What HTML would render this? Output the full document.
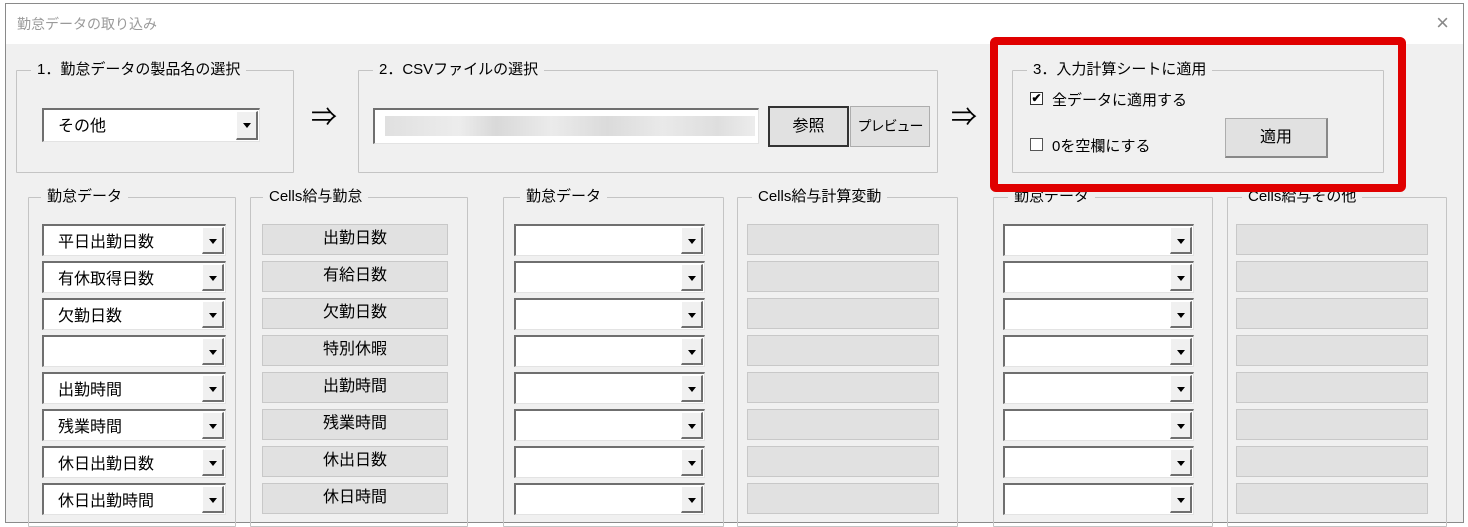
<!DOCTYPE html>
<html><head><meta charset="utf-8"><style>
*{box-sizing:border-box;margin:0;padding:0}
body{width:1468px;height:507px;overflow:hidden;background:#fff;font-family:"Liberation Sans","Noto Sans CJK JP",sans-serif;position:relative;color:#000}
.win{position:absolute;left:5px;top:3px;width:1459px;height:520px;border:1px solid #8a8a8a;background:#f0f0f0}
.tb{position:absolute;left:0;top:0;right:0;height:40px;background:#fff}
.title{position:absolute;left:11px;top:10px;font-size:14px;color:#9a9a9a}
.x{position:absolute;right:14px;top:6px;font-size:22px;color:#888;font-weight:300}
.g{position:absolute;border:1px solid #c4c4c4;border-radius:1px}
.gl{position:absolute;top:-11px;background:#f0f0f0;padding:0 6px;font-size:15px;line-height:20px;white-space:nowrap}
.a{position:absolute;font-size:26px;line-height:26px}
.cb{position:absolute;height:32px;background:#fff;border-top:2px solid #6f6f6f;border-left:2px solid #6f6f6f;border-bottom:1px solid #e3e3e3;border-right:1px solid #e3e3e3}
.cb span{position:absolute;left:14px;top:2px;font-size:16px}
.cb i{position:absolute;right:1px;top:1px;width:22px;height:27px;background:#f0f0f0;border-right:2px solid #6f6f6f;border-bottom:2px solid #6f6f6f;border-top:1px solid #fff;border-left:1px solid #fff}
.cb i:after{content:"";position:absolute;left:6px;top:11px;border-left:4px solid transparent;border-right:4px solid transparent;border-top:5px solid #000}
.lb{position:absolute;height:31px;background:#e1e1e1;border:1px solid #c8c8c8;font-size:16px;text-align:center;line-height:27px}
.bt{position:absolute;background:#e1e1e1;border:1px solid #adadad;font-size:16px;text-align:center;white-space:nowrap}
.ck{position:absolute;width:13px;height:13px;background:#fff;border:1px solid #333;font-size:12px;line-height:11px;text-align:center}
.t{position:absolute;font-size:15px;white-space:nowrap}
</style></head><body>
<div class="win">
<div class="tb"><div class="title">勤怠データの取り込み</div><div class="x">×</div></div>
</div>

<div class="g" style="left:16px;top:70px;width:278px;height:103px"><div class="gl" style="left:14px">1．勤怠データの製品名の選択</div></div>
<div class="cb" style="left:42px;top:108px;width:218px;height:34px"><span>その他</span><i style="height:29px"></i></div>
<div class="a" style="left:311px;top:104px">⇒</div>

<div class="g" style="left:358px;top:70px;width:580px;height:103px"><div class="gl" style="left:14px">2．CSVファイルの選択</div></div>
<div class="cb" style="left:373px;top:108px;width:386px;height:36px"></div>
<div style="position:absolute;left:385px;top:116px;width:370px;height:20px;background:linear-gradient(90deg,#d8d8d8,#e8e8e8 20%,#cfcfcf 30%,#e6e6e6 45%,#d2d2d2 60%,#e4e4e4 75%,#d6d6d6 90%,#e8e8e8);opacity:.8"></div>
<div class="bt" style="left:768px;top:106px;width:81px;height:41px;border:2px solid #333;line-height:37px">参照</div>
<div class="bt" style="left:850px;top:106px;width:80px;height:41px;line-height:39px;font-size:14px;letter-spacing:-1px">プレビュー</div>
<div class="a" style="left:951px;top:104px">⇒</div>

<div class="g" style="left:1012px;top:70px;width:372px;height:103px"><div class="gl" style="left:14px">3．入力計算シートに適用</div></div>
<div class="ck" style="left:1030px;top:92px;font-weight:bold">✔</div><div class="t" style="left:1052px;top:89px">全データに適用する</div>
<div class="ck" style="left:1030px;top:138px;border-color:#555"></div><div class="t" style="left:1052px;top:135px">0を空欄にする</div>
<div class="bt" style="left:1225px;top:118px;width:103px;height:40px;line-height:38px;border-right:2px solid #888;border-bottom:2px solid #888">適用</div>

<div class="g" style="left:28px;top:197px;width:208px;height:330px"><div class="gl" style="left:12px">勤怠データ</div></div>
<div class="g" style="left:250px;top:197px;width:218px;height:330px"><div class="gl" style="left:12px">Cells給与勤怠</div></div>
<div class="g" style="left:503px;top:197px;width:221px;height:330px"><div class="gl" style="left:16px">勤怠データ</div></div>
<div class="g" style="left:737px;top:197px;width:221px;height:330px"><div class="gl" style="left:14px">Cells給与計算変動</div></div>
<div class="g" style="left:993px;top:197px;width:220px;height:330px"><div class="gl" style="left:14px">勤怠データ</div></div>
<div class="g" style="left:1227px;top:197px;width:220px;height:330px"><div class="gl" style="left:14px">Cells給与その他</div></div>

<div style="position:absolute;left:990px;top:37px;width:416px;height:155px;border:8px solid #e00000;border-radius:6px;z-index:5"></div>

<!-- col A -->
<div class="cb" style="left:42px;top:224px;width:184px"><span>平日出勤日数</span><i></i></div>
<div class="cb" style="left:42px;top:261px;width:184px"><span>有休取得日数</span><i></i></div>
<div class="cb" style="left:42px;top:298px;width:184px"><span>欠勤日数</span><i></i></div>
<div class="cb" style="left:42px;top:335px;width:184px"><i></i></div>
<div class="cb" style="left:42px;top:372px;width:184px"><span>出勤時間</span><i></i></div>
<div class="cb" style="left:42px;top:409px;width:184px"><span>残業時間</span><i></i></div>
<div class="cb" style="left:42px;top:446px;width:184px"><span>休日出勤日数</span><i></i></div>
<div class="cb" style="left:42px;top:483px;width:184px"><span>休日出勤時間</span><i></i></div>
<!-- col B -->
<div class="lb" style="left:262px;top:224px;width:186px">出勤日数</div>
<div class="lb" style="left:262px;top:261px;width:186px">有給日数</div>
<div class="lb" style="left:262px;top:298px;width:186px">欠勤日数</div>
<div class="lb" style="left:262px;top:335px;width:186px">特別休暇</div>
<div class="lb" style="left:262px;top:372px;width:186px">出勤時間</div>
<div class="lb" style="left:262px;top:409px;width:186px">残業時間</div>
<div class="lb" style="left:262px;top:446px;width:186px">休出日数</div>
<div class="lb" style="left:262px;top:483px;width:186px">休日時間</div>
<!-- col C -->
<div class="cb" style="left:514px;top:224px;width:191px"><i></i></div>
<div class="cb" style="left:514px;top:261px;width:191px"><i></i></div>
<div class="cb" style="left:514px;top:298px;width:191px"><i></i></div>
<div class="cb" style="left:514px;top:335px;width:191px"><i></i></div>
<div class="cb" style="left:514px;top:372px;width:191px"><i></i></div>
<div class="cb" style="left:514px;top:409px;width:191px"><i></i></div>
<div class="cb" style="left:514px;top:446px;width:191px"><i></i></div>
<div class="cb" style="left:514px;top:483px;width:191px"><i></i></div>
<!-- col D -->
<div class="lb" style="left:747px;top:224px;width:192px"></div>
<div class="lb" style="left:747px;top:261px;width:192px"></div>
<div class="lb" style="left:747px;top:298px;width:192px"></div>
<div class="lb" style="left:747px;top:335px;width:192px"></div>
<div class="lb" style="left:747px;top:372px;width:192px"></div>
<div class="lb" style="left:747px;top:409px;width:192px"></div>
<div class="lb" style="left:747px;top:446px;width:192px"></div>
<div class="lb" style="left:747px;top:483px;width:192px"></div>
<!-- col E -->
<div class="cb" style="left:1003px;top:224px;width:191px"><i></i></div>
<div class="cb" style="left:1003px;top:261px;width:191px"><i></i></div>
<div class="cb" style="left:1003px;top:298px;width:191px"><i></i></div>
<div class="cb" style="left:1003px;top:335px;width:191px"><i></i></div>
<div class="cb" style="left:1003px;top:372px;width:191px"><i></i></div>
<div class="cb" style="left:1003px;top:409px;width:191px"><i></i></div>
<div class="cb" style="left:1003px;top:446px;width:191px"><i></i></div>
<div class="cb" style="left:1003px;top:483px;width:191px"><i></i></div>
<!-- col F -->
<div class="lb" style="left:1236px;top:224px;width:192px"></div>
<div class="lb" style="left:1236px;top:261px;width:192px"></div>
<div class="lb" style="left:1236px;top:298px;width:192px"></div>
<div class="lb" style="left:1236px;top:335px;width:192px"></div>
<div class="lb" style="left:1236px;top:372px;width:192px"></div>
<div class="lb" style="left:1236px;top:409px;width:192px"></div>
<div class="lb" style="left:1236px;top:446px;width:192px"></div>
<div class="lb" style="left:1236px;top:483px;width:192px"></div>
</body></html>
